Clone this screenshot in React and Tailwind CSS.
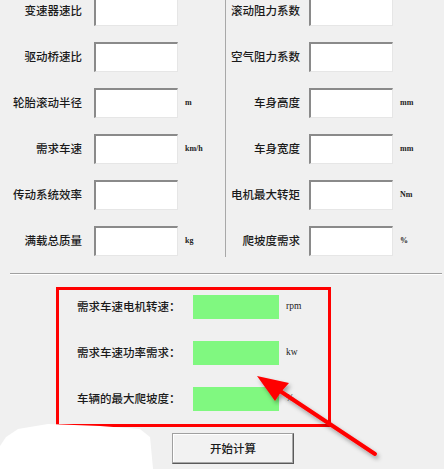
import React from "react";

const cjk = { fontFamily: '"Noto Sans CJK SC", "Noto Sans", sans-serif' };
const serif = { fontFamily: '"Liberation Serif", "DejaVu Serif", serif' };

function Field({ label, unit, labelW }) {
  return (
    <div className="flex h-[46px] items-center">
      <div
        className={`${labelW} shrink-0 text-right text-[11.5px] font-medium leading-none text-[#1a1a1a]`}
        style={cjk}
      >
        {label}
      </div>
      <div className="h-[30px] w-[84px] shrink-0 border-t-2 border-l-2 border-r border-b border-t-[#8a8a8a] border-l-[#8a8a8a] border-r-[#e6e6e6] border-b-[#e6e6e6] bg-white" />
      <div className="ml-[7px] text-[8px] font-bold leading-none text-[#222]" style={serif}>
        {unit}
      </div>
    </div>
  );
}

function Result({ label, unit }) {
  return (
    <div className="flex h-[24px] items-center">
      <div className="w-[116px] shrink-0 text-[11.5px] font-medium leading-none text-[#1a1a1a]" style={cjk}>
        {label}
      </div>
      <div className="h-[24px] w-[86px] shrink-0 bg-[#80f880]" />
      <div className="ml-[7px] text-[9.5px] leading-none text-[#222]" style={serif}>
        {unit}
      </div>
    </div>
  );
}

export default function App() {
  const left = [
    ["变速器速比", ""],
    ["驱动桥速比", ""],
    ["轮胎滚动半径", "m"],
    ["需求车速", "km/h"],
    ["传动系统效率", ""],
    ["满载总质量", "kg"],
  ];
  const right = [
    ["滚动阻力系数", ""],
    ["空气阻力系数", ""],
    ["车身高度", "mm"],
    ["车身宽度", "mm"],
    ["电机最大转矩", "Nm"],
    ["爬坡度需求", "%"],
  ];
  return (
    <div className="relative h-[469px] w-[444px] overflow-hidden bg-[#f0f0f0]">
      <div className="flex h-[257px]">
        <div className="w-[225px] shrink-0">
          <div className="-mt-[12px] flex flex-col">
            {left.map(([l, u]) => (
              <Field key={l} label={l} unit={u} labelW="w-[94px] pr-[12px]" />
            ))}
          </div>
        </div>
        <div className="flex-1 border-l border-l-[#a8a8a8]">
          <div className="-mt-[12px] flex flex-col">
            {right.map(([l, u]) => (
              <Field key={l} label={l} unit={u} labelW="w-[83px] pr-[9px]" />
            ))}
          </div>
        </div>
      </div>

      <div className="mt-[16px] ml-[10px] mr-[2px] h-[2px] border-t border-t-[#a0a0a0] border-b border-b-white" />

      <div className="mt-[12px] ml-[56px] h-[140px] w-[275px] border-[3px] border-[#ff0000] pt-[5px] pl-[18px]">
        <div className="flex flex-col gap-[22px]">
          <Result label="需求车速电机转速：" unit="rpm" />
          <Result label="需求车速功率需求：" unit="kw" />
          <Result label="车辆的最大爬坡度：" unit="%" />
        </div>
      </div>

      <div className="mt-[6px] ml-[172px] flex h-[31px] w-[122px] items-center justify-center border border-t-[#a0a0a0] border-l-[#a0a0a0] border-r-[#5a5a5a] border-b-[#5a5a5a] bg-[#f2f2f2] shadow-[inset_-1px_-1px_0_#a8a8a8,inset_1px_1px_0_#ffffff]">
        <span className="text-[11.5px] font-medium leading-none text-[#1a1a1a]" style={cjk}>
          开始计算
        </span>
      </div>

      <svg className="pointer-events-none absolute left-0 top-0" width="444" height="469" viewBox="0 0 444 469">
        <defs>
          <filter id="sh" x="-20%" y="-20%" width="140%" height="140%">
            <feDropShadow dx="2" dy="3" stdDeviation="2" floodColor="#000" floodOpacity="0.35" />
          </filter>
        </defs>
        <path
          d="M0 469 L0 446 L6 437 L18 429 L48 424 L100 426 L140 429 L150 437 L153 469 Z"
          fill="#ffffff"
        />
        <g filter="url(#sh)">
          <line x1="375" y1="454" x2="274" y2="387" stroke="#ff0000" strokeWidth="4" strokeLinecap="round" />
          <polygon points="257,376 289,383 281,392 275,401" fill="#ff0000" />
        </g>
      </svg>
    </div>
  );
}
